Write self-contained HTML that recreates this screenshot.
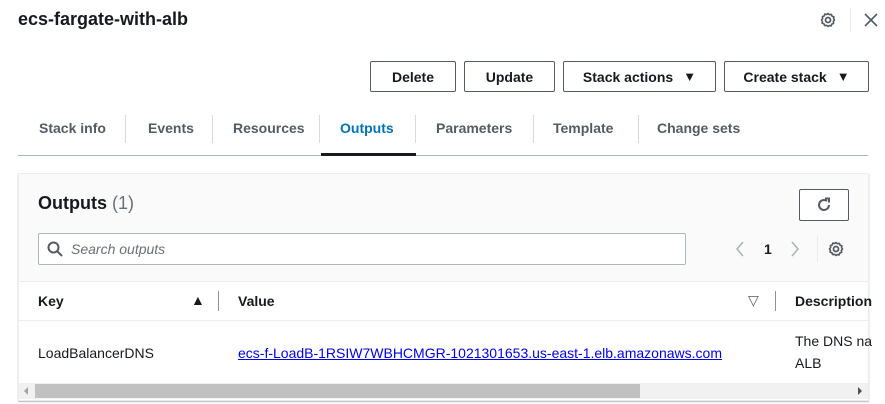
<!DOCTYPE html>
<html><head><meta charset="utf-8"><style>
*{box-sizing:border-box;margin:0;padding:0}
body{width:885px;height:404px;background:#fff;font-family:"Liberation Sans",sans-serif;color:#16191f;position:relative;overflow:hidden;font-size:14px}
.a{position:absolute;white-space:nowrap}
.btn{position:absolute;top:61px;height:31px;border:1px solid #545b64;border-radius:2px;background:#fff;font-weight:bold;font-size:14px;color:#16191f;display:flex;align-items:center;justify-content:center}
.tab{position:absolute;top:120px;font-weight:bold;color:#545b64;font-size:14px}
.sep{position:absolute;width:1px;background:#d5dbdb}
.tri{font-size:13px;margin-left:10px}
</style></head><body>
<div class="a" style="left:18px;top:9px;font-size:18px;font-weight:bold">ecs-fargate-with-alb</div>
<svg class="a" style="left:819px;top:11px" width="18" height="18" viewBox="0 0 18 18"><circle cx="9" cy="9" r="2.5" fill="none" stroke="#545b64" stroke-width="1.8"/><path d="M9 2.5l1.5 1.2 1.9-.3.7 1.8 1.8.7-.3 1.9L15.5 9l-1.2 1.5.3 1.9-1.8.7-.7 1.8-1.9-.3L9 15.5l-1.5-1.2-1.9.3-.7-1.8-1.8-.7.3-1.9L2.5 9l1.2-1.5-.3-1.9 1.8-.7.7-1.8 1.9.3z" fill="none" stroke="#545b64" stroke-width="1.6" stroke-linejoin="round"/></svg>
<div class="sep" style="left:850px;top:8px;height:24px;background:#eaeded"></div>
<svg class="a" style="left:864px;top:13px" width="14" height="14"><path d="M1 1L13 13M13 1L1 13" stroke="#545b64" stroke-width="1.6"/></svg>

<div class="btn" style="left:370px;width:86px">Delete</div>
<div class="btn" style="left:464px;width:91px">Update</div>
<div class="btn" style="left:563px;width:153px">Stack actions<span class="tri">▼</span></div>
<div class="btn" style="left:724px;width:145px">Create stack<span class="tri">▼</span></div>

<div class="tab" style="left:39px">Stack info</div>
<div class="sep" style="left:125px;top:115px;height:28px"></div>
<div class="tab" style="left:148px">Events</div>
<div class="sep" style="left:212px;top:115px;height:28px"></div>
<div class="tab" style="left:233px">Resources</div>
<div class="sep" style="left:319px;top:115px;height:28px"></div>
<div class="tab" style="left:340px;color:#0073bb">Outputs</div>
<div class="sep" style="left:415px;top:115px;height:28px"></div>
<div class="tab" style="left:436px">Parameters</div>
<div class="sep" style="left:533px;top:115px;height:28px"></div>
<div class="tab" style="left:553px">Template</div>
<div class="sep" style="left:638px;top:115px;height:28px"></div>
<div class="tab" style="left:657px">Change sets</div>
<div class="a" style="left:18px;top:155px;width:850px;height:1px;background:#aab7b8"></div>
<div class="a" style="left:321px;top:153px;width:95px;height:3px;background:#16191f"></div>

<div class="a" style="left:18px;top:173px;width:851px;height:228px;border:1px solid #eaeded;box-shadow:0 1px 1px rgba(0,28,36,.3);background:#fff"></div>
<div class="a" style="left:19px;top:174px;width:849px;height:108px;background:#fafafa;border-bottom:1px solid #eaeded"></div>
<div class="a" style="left:38px;top:193px;font-size:18px;font-weight:bold">Outputs <span style="font-weight:normal;color:#687078">(1)</span></div>
<div class="a" style="left:799px;top:189px;width:50px;height:32px;border:1px solid #545b64;border-radius:2px;background:#fff"></div>
<svg class="a" style="left:815px;top:196px" width="18" height="18" viewBox="0 0 18 18"><path d="M14 9a5 5 0 1 1-2-4" fill="none" stroke="#545b64" stroke-width="2"/><path d="M10 2.5h4v4" fill="none" stroke="#545b64" stroke-width="2"/></svg>
<div class="a" style="left:38px;top:233px;width:648px;height:32px;border:1px solid #aab7b8;border-radius:2px;background:#fff"></div>
<svg class="a" style="left:46px;top:240px" width="18" height="18"><circle cx="7.5" cy="7.5" r="5" fill="none" stroke="#545b64" stroke-width="2"/><path d="M11 11l5 5" stroke="#545b64" stroke-width="2"/></svg>
<div class="a" style="left:71px;top:241px;font-style:italic;color:#687078">Search outputs</div>
<svg class="a" style="left:735px;top:241px" width="10" height="16"><path d="M8 1L2 8l6 7" fill="none" stroke="#aab7b8" stroke-width="1.6"/></svg>
<div class="a" style="left:764px;top:241px;font-weight:bold">1</div>
<svg class="a" style="left:790px;top:241px" width="10" height="16"><path d="M2 1l6 7-6 7" fill="none" stroke="#aab7b8" stroke-width="1.6"/></svg>
<div class="sep" style="left:817px;top:236px;height:26px;background:#eaeded"></div>
<svg class="a" style="left:827px;top:240px" width="18" height="18" viewBox="0 0 18 18"><circle cx="9" cy="9" r="2.5" fill="none" stroke="#545b64" stroke-width="1.8"/><path d="M9 2.5l1.5 1.2 1.9-.3.7 1.8 1.8.7-.3 1.9L15.5 9l-1.2 1.5.3 1.9-1.8.7-.7 1.8-1.9-.3L9 15.5l-1.5-1.2-1.9.3-.7-1.8-1.8-.7.3-1.9L2.5 9l1.2-1.5-.3-1.9 1.8-.7.7-1.8 1.9.3z" fill="none" stroke="#545b64" stroke-width="1.6" stroke-linejoin="round"/></svg>

<div class="a" style="left:38px;top:293px;font-weight:bold">Key</div>
<div class="a" style="left:191px;top:292px;font-size:14px">▲</div>
<div class="sep" style="left:218px;top:291px;height:20px;background:#879596"></div>
<div class="a" style="left:238px;top:293px;font-weight:bold">Value</div>
<div class="a" style="left:748px;top:292px;font-size:14px;color:#545b64">▽</div>
<div class="sep" style="left:775px;top:291px;height:20px;background:#879596"></div>
<div class="a" style="left:795px;top:293px;font-weight:bold">Description</div>
<div class="a" style="left:19px;top:320px;width:849px;height:1px;background:#eaeded"></div>

<div class="a" style="left:38px;top:345px">LoadBalancerDNS</div>
<div class="a" style="left:238px;top:345px;color:#0000ee;text-decoration:underline">ecs-f-LoadB-1RSIW7WBHCMGR-1021301653.us-east-1.elb.amazonaws.com</div>
<div class="a" style="left:795px;top:333px">The DNS na</div>
<div class="a" style="left:795px;top:355px">ALB</div>

<div class="a" style="left:19px;top:383px;width:849px;height:16px;background:#f1f1f1"></div>
<div class="a" style="left:35px;top:384px;width:605px;height:14px;background:#c1c1c1"></div>
<div class="a" style="left:24px;top:387px;width:0;height:0;border-top:4px solid transparent;border-bottom:4px solid transparent;border-right:4px solid #a3a3a3"></div>
<div class="a" style="left:858px;top:387px;width:0;height:0;border-top:4px solid transparent;border-bottom:4px solid transparent;border-left:4px solid #505050"></div>
</body></html>
